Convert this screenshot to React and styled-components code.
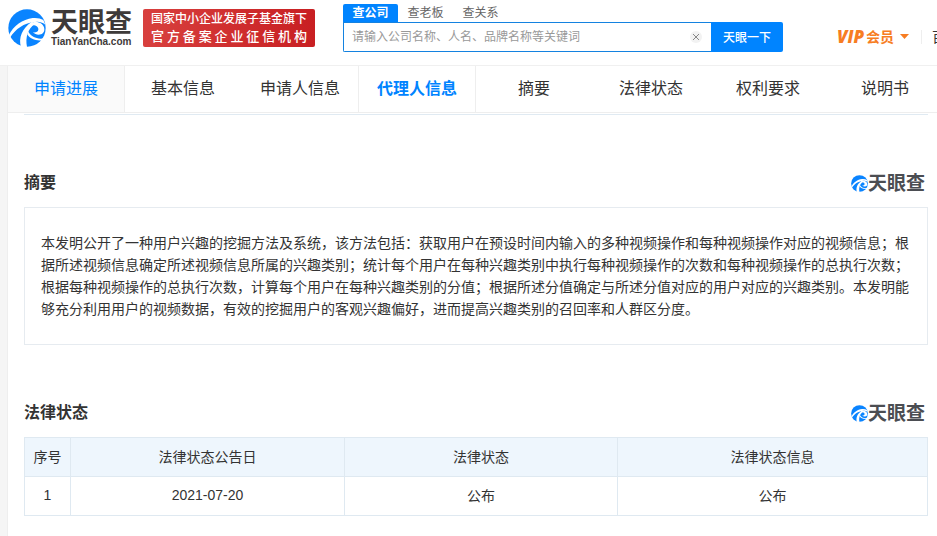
import React, { useState } from "react";
import styled, { createGlobalStyle } from "styled-components";

const searchTypes = ["查公司", "查老板", "查关系"];

const navItems = [
  "申请进展",
  "基本信息",
  "申请人信息",
  "代理人信息",
  "摘要",
  "法律状态",
  "权利要求",
  "说明书",
];

const legalRows = [{ id: 1, date: "2021-07-20", status: "公布", info: "公布" }];

const Swirl = ({ size }) => (
  <svg width={size} height={size} viewBox="0 0 114 114" aria-hidden="true">
    <circle cx="57" cy="57" r="56" fill="#0a84ff" />
    <g fill="#fff">
      <path d="M2 80C16 50 44 31 74 27c14-1 24 1 32 6l6 14c-12-9-24-10-36-7C50 42 22 60 6 86Z" />
      <path d="M39 114C31 86 42 58 72 38l8 7C60 60 51 84 57 114Z" />
      <path d="M66 43c20-9 38-2 42 12 3 10-1 19-9 21-9 3-18 0-24-6 9 1 15-2 16-8 1-8-7-14-19-13Z" />
      <path d="M60 67c10 17 28 25 48 21l-3 6C84 97 66 90 58 76Z" />
    </g>
  </svg>
);

export default function App() {
  const [type, setType] = useState("查公司");
  const [active, setActive] = useState("代理人信息");
  const [keyword, setKeyword] = useState("");

  return (
    <>
      <GlobalStyle />
      <Header>
        <Logo href="#">
          <Swirl size={38} />
          <LogoText>
            <strong>天眼查</strong>
            <small>TianYanCha.com</small>
          </LogoText>
        </Logo>
        <Slogan>
          <p>国家中小企业发展子基金旗下</p>
          <p>官方备案企业征信机构</p>
        </Slogan>
        <Search onSubmit={(e) => e.preventDefault()}>
          <SearchTypes>
            {searchTypes.map((item) => (
              <SearchType
                key={item}
                type="button"
                $active={item === type}
                onClick={() => setType(item)}
              >
                {item}
              </SearchType>
            ))}
          </SearchTypes>
          <SearchRow>
            <SearchBox>
              <input
                aria-label="搜索"
                placeholder="请输入公司名称、人名、品牌名称等关键词"
                value={keyword}
                onChange={(e) => setKeyword(e.target.value)}
              />
              <ClearButton
                type="button"
                aria-label="清除"
                onClick={() => setKeyword("")}
              >
                <svg width="6" height="6" viewBox="0 0 6 6">
                  <path d="M0 0L6 6M6 0L0 6" stroke="#888" />
                </svg>
              </ClearButton>
            </SearchBox>
            <SubmitButton type="submit">天眼一下</SubmitButton>
          </SearchRow>
        </Search>
        <Vip href="#">
          <em>VIP</em>
          <span>会员</span>
          <svg width="9" height="5" viewBox="0 0 9 5">
            <path d="M0 0h9L4.5 5z" fill="#f77d22" />
          </svg>
        </Vip>
        <MoreLink href="#">百</MoreLink>
      </Header>

      <Page>
        <Nav>
          {navItems.map((item, i) => (
            <NavItem
              key={item}
              href="#"
              $active={item === active}
              $first={i === 0}
              onClick={() => setActive(item)}
            >
              {item}
            </NavItem>
          ))}
        </Nav>
        <Content>
          <TableEnd />
          <Section>
            <SectionHeader>
              <h2>摘要</h2>
              <Watermark>
                <Swirl size={17} />
                <span>天眼查</span>
              </Watermark>
            </SectionHeader>
            <Abstract>
              本发明公开了一种用户兴趣的挖掘方法及系统，该方法包括：获取用户在预设时间内输入的多种视频操作和每种视频操作对应的视频信息；根据所述视频信息确定所述视频信息所属的兴趣类别；统计每个用户在每种兴趣类别中执行每种视频操作的次数和每种视频操作的总执行次数；根据每种视频操作的总执行次数，计算每个用户在每种兴趣类别的分值；根据所述分值确定与所述分值对应的用户对应的兴趣类别。本发明能够充分利用用户的视频数据，有效的挖掘用户的客观兴趣偏好，进而提高兴趣类别的召回率和人群区分度。
            </Abstract>
          </Section>
          <Section>
            <SectionHeader>
              <h2>法律状态</h2>
              <Watermark>
                <Swirl size={17} />
                <span>天眼查</span>
              </Watermark>
            </SectionHeader>
            <Table>
              <thead>
                <tr>
                  <Th $width="46px">序号</Th>
                  <Th $width="274px">法律状态公告日</Th>
                  <Th $width="273px">法律状态</Th>
                  <Th>法律状态信息</Th>
                </tr>
              </thead>
              <tbody>
                {legalRows.map((row) => (
                  <tr key={row.id}>
                    <Td>{row.id}</Td>
                    <Td>{row.date}</Td>
                    <Td>{row.status}</Td>
                    <Td>{row.info}</Td>
                  </tr>
                ))}
              </tbody>
            </Table>
          </Section>
        </Content>
      </Page>
    </>
  );
}

const GlobalStyle = createGlobalStyle`
  * {
    box-sizing: border-box;
  }
  body {
    margin: 0;
    overflow-x: hidden;
    background: #f5f5f5;
    color: #333;
    font-family: "Liberation Sans", "Noto Sans CJK SC", sans-serif;
    font-size: 14px;
  }
  h2, p {
    margin: 0;
  }
  a {
    color: inherit;
    text-decoration: none;
  }
  button, input {
    margin: 0;
    padding: 0;
    border: 0;
    background: none;
    font: inherit;
    color: inherit;
  }
  svg {
    display: block;
    flex-shrink: 0;
  }
`;

const Header = styled.header`
  display: flex;
  align-items: flex-start;
  height: 66px;
  padding-left: 8px;
  overflow: hidden;
  white-space: nowrap;
  background: #fff;
  border-bottom: 1px solid #f0f0f0;
`;

const Logo = styled.a`
  display: flex;
  flex-shrink: 0;
  gap: 5px;
  width: 135px;
  padding-top: 9px;
`;

const LogoText = styled.span`
  display: flex;
  flex-direction: column;
  padding-top: 1px;
  color: #3e3a39;
  strong {
    font-size: 27px;
    line-height: 27px;
  }
  small {
    font-size: 10px;
    font-weight: 700;
    line-height: 10px;
  }
`;

const Slogan = styled.div`
  flex-shrink: 0;
  width: 172px;
  height: 38px;
  margin-top: 9px;
  padding: 1px 8px;
  border-radius: 2px;
  background: linear-gradient(90deg, #d8403e, #c81f22);
  color: #fff;
  font-size: 12px;
  font-weight: 500;
  line-height: 18px;
  p {
    text-align-last: justify;
  }
  p + p {
    font-size: 13px;
  }
`;

const Search = styled.form`
  flex-shrink: 0;
  width: 440px;
  margin: 4px 0 0 28px;
  font-size: 12px;
`;

const SearchTypes = styled.div`
  display: flex;
`;

const SearchType = styled.button`
  width: 55px;
  height: 18px;
  border-radius: 2px 2px 0 0;
  background: ${({ $active }) => ($active ? "#0084ff" : "transparent")};
  color: ${({ $active }) => ($active ? "#fff" : "#666")};
  font-weight: ${({ $active }) => ($active ? 700 : 400)};
  line-height: 18px;
`;

const SearchRow = styled.div`
  display: flex;
  height: 30px;
`;

const SearchBox = styled.div`
  display: flex;
  flex: 1;
  align-items: center;
  padding: 0 9px 0 8px;
  border: 1px solid #1482e0;
  border-right: 0;
  border-radius: 0 0 0 2px;
  input {
    flex: 1;
    min-width: 0;
    outline: none;
  }
  input::placeholder {
    color: #999;
  }
`;

const ClearButton = styled.button`
  display: flex;
  align-items: center;
  justify-content: center;
  width: 12px;
  height: 12px;
  border-radius: 50%;
  background: #f2f2f2;
`;

const SubmitButton = styled.button`
  width: 72px;
  padding-bottom: 2px;
  border-radius: 0 2px 2px 0;
  background: #0084ff;
  color: #fff;
  font-weight: 500;
`;

const Vip = styled.a`
  display: flex;
  flex-shrink: 0;
  align-items: center;
  height: 20px;
  margin: 26px 0 0 54px;
  color: #f77d22;
  font-size: 14px;
  font-weight: 700;
  em {
    margin-right: 2px;
    font-family: "Open Sans", sans-serif;
    font-size: 17px;
    font-weight: 800;
  }
  svg {
    margin-left: 6px;
  }
`;

const MoreLink = styled.a`
  flex-shrink: 0;
  height: 14px;
  margin: 30px 0 0 12px;
  padding-left: 10px;
  border-left: 1px solid #eee;
  font-size: 14px;
  line-height: 14px;
`;

const Page = styled.main`
  margin-left: 7px;
  background: #fff;
  border-left: 1px solid #eee;
`;

const Nav = styled.nav`
  display: flex;
  overflow: hidden;
  border-bottom: 1px solid #eee;
`;

const NavItem = styled.a`
  flex: 1 0 117px;
  height: 46px;
  border-right: 1px solid ${({ $active, $first }) => ($active || $first ? "#eee" : "transparent")};
  background: ${({ $first }) => ($first ? "#fafafa" : "#fff")};
  color: ${({ $active, $first }) => ($active || $first ? "#0084ff" : "#333")};
  font-size: 16px;
  font-weight: ${({ $active }) => ($active ? 700 : 400)};
  line-height: 46px;
  text-align: center;
  /* left edge of the current tab */
  box-shadow: ${({ $active }) => ($active ? "-1px 0 #eee" : "none")};
`;

const Content = styled.div`
  padding: 0 9px 20px 16px;
`;

const TableEnd = styled.div`
  height: 2px;
  border-bottom: 1px solid #e0eaf2;
`;

const Section = styled.section`
  margin-top: 56px;
`;

const SectionHeader = styled.div`
  display: flex;
  align-items: center;
  justify-content: space-between;
  height: 24px;
  margin-bottom: 12px;
  h2 {
    font-size: 16px;
    line-height: 24px;
  }
`;

const Watermark = styled.span`
  display: flex;
  align-items: center;
  padding-right: 3px;
  color: #4b4d52;
  font-size: 19px;
  font-weight: 700;
  line-height: 24px;
  span {
    padding-top: 2px;
  }
`;

const Abstract = styled.p`
  padding: 24px 16px;
  border: 1px solid #e6ebf0;
  line-height: 22px;
`;

const Table = styled.table`
  width: 100%;
  table-layout: fixed;
  border-collapse: collapse;
  text-align: center;
`;

const Th = styled.th`
  width: ${({ $width }) => $width || "auto"};
  height: 39px;
  padding: 0 0 2px;
  border: 1px solid #dfe9f1;
  background: #eef6fd;
  font-weight: 400;
`;

const Td = styled.td`
  height: 39px;
  padding: 0 0 2px;
  border: 1px solid #dfe9f1;
`;
